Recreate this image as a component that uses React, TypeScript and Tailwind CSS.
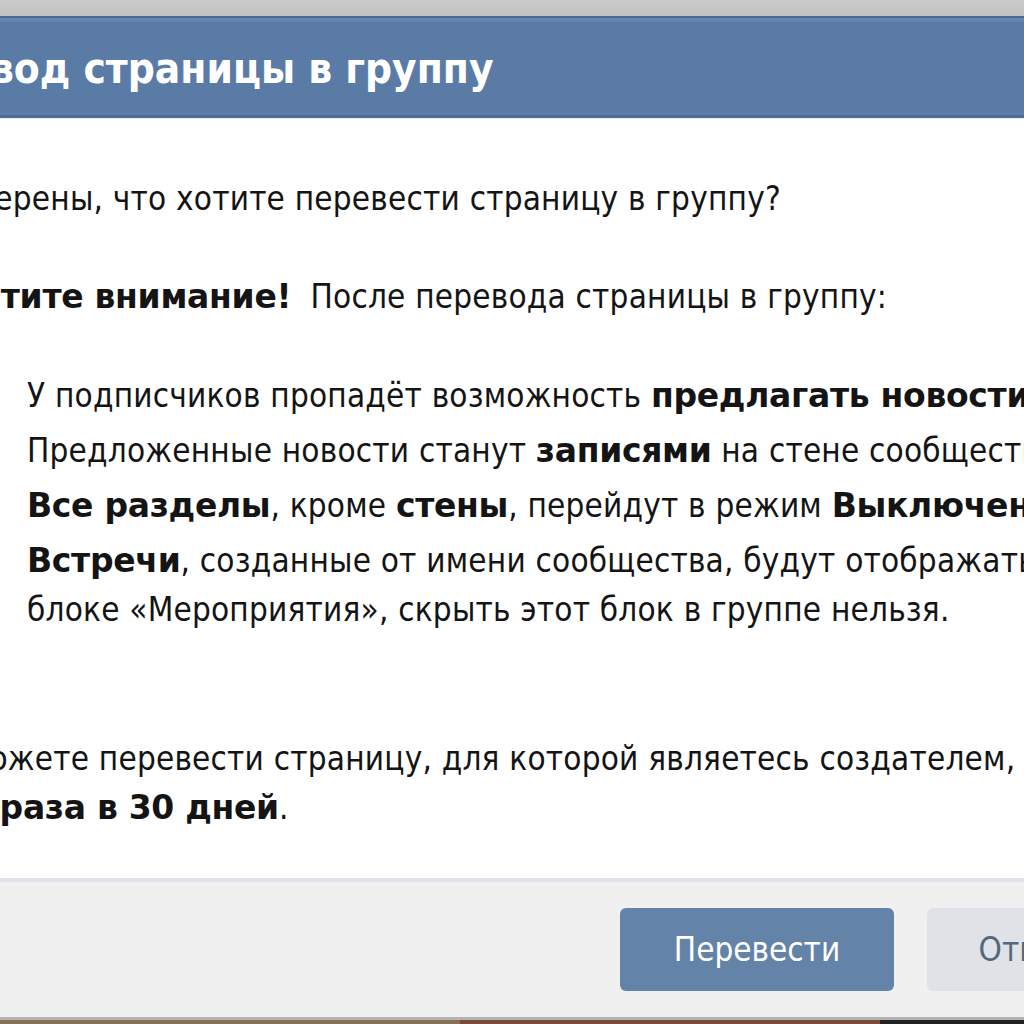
export default function App() {
  const font = '"DejaVu Sans Condensed", "DejaVu Sans", Tahoma, sans-serif';
  const bold = 'font-bold font-["DejaVu_Sans",sans-serif] tracking-[-0.3px]';

  return (
    <div
      className="relative h-[1024px] w-[1024px] overflow-hidden bg-[#c6c6c6]"
      style={{ fontFamily: font }}
    >
      {/* page behind the box */}
      <div className="h-[16px] bg-gradient-to-b from-[#cbcbcb] to-[#c1c1c1]" />

      {/* dialog, wider than the window */}
      <div className="ml-[-140px] flex w-[1400px] flex-col">
        <div className="h-[2px] bg-[#4b6a90]" />
        <div className="h-[4px] bg-[#6386b0]" />
        <div className="flex h-[93px] items-center bg-[#5a7ba6] pl-[20px]">
          <h1 className="whitespace-nowrap text-[42px] font-bold leading-none text-white">
            Перевод страницы в группу
          </h1>
        </div>
        <div className="h-[3px] bg-[#4d6c93]" />
        <div className="h-[1px] bg-[#e6ebf1]" />

        <div className="h-[759px] bg-white pl-[45px] pt-[55px] text-[33px] leading-[49px] tracking-[0.2px] text-[#141414]">
          <p className="whitespace-nowrap">Вы уверены, что хотите перевести страницу в группу?</p>

          <p className="mt-[49px] whitespace-nowrap">
            <b className={bold}>Обратите внимание!</b>&nbsp; После перевода страницы в группу:
          </p>

          <ul className="mt-[50px] flex flex-col gap-[6px] pl-[122px]">
            <li className="whitespace-nowrap">
              У подписчиков пропадёт возможность <b className={bold}>предлагать новости</b>.
            </li>
            <li className="whitespace-nowrap">
              Предложенные новости станут <b className={bold}>записями</b> на стене сообщества.
            </li>
            <li className="whitespace-nowrap">
              <b className={bold}>Все разделы</b>, кроме <b className={bold}>стены</b>, перейдут в режим{' '}
              <b className={bold}>Выключены</b>.
            </li>
            <li className="whitespace-nowrap">
              <b className={bold}>Встречи</b>, созданные от имени сообщества, будут отображаться в
              <br />
              блоке «Мероприятия», скрыть этот блок в группе нельзя.
            </li>
          </ul>

          <p className="mt-[100px] whitespace-nowrap pl-[8px]">
            Вы можете перевести страницу, для которой являетесь создателем, <b className={bold}>не чаще</b>
            <br />
            <b className={bold}>1-го раза в 30 дней</b>.
          </p>
        </div>

        <div className="h-[4px] bg-[#dde3ea]" />
        <div className="flex h-[135px] items-center gap-[33px] bg-[#f0f0f0] pl-[760px]">
          <button
            type="button"
            className="h-[83px] w-[274px] rounded-[6px] bg-[#6383a8] text-[33px] text-white"
          >
            Перевести
          </button>
          <button
            type="button"
            className="h-[83px] w-[222px] rounded-[6px] bg-[#dfe2e7] text-[33px] text-[#55677d]"
          >
            Отмена
          </button>
        </div>
        <div className="h-[3px] bg-[#b3b3b3]" />
        <div className="flex h-[8px]">
          <div className="w-[600px] bg-[#86705a]" />
          <div className="w-[420px] bg-[#7a4a3a]" />
          <div className="w-[380px] bg-[#222]" />
        </div>
      </div>
    </div>
  );
}
